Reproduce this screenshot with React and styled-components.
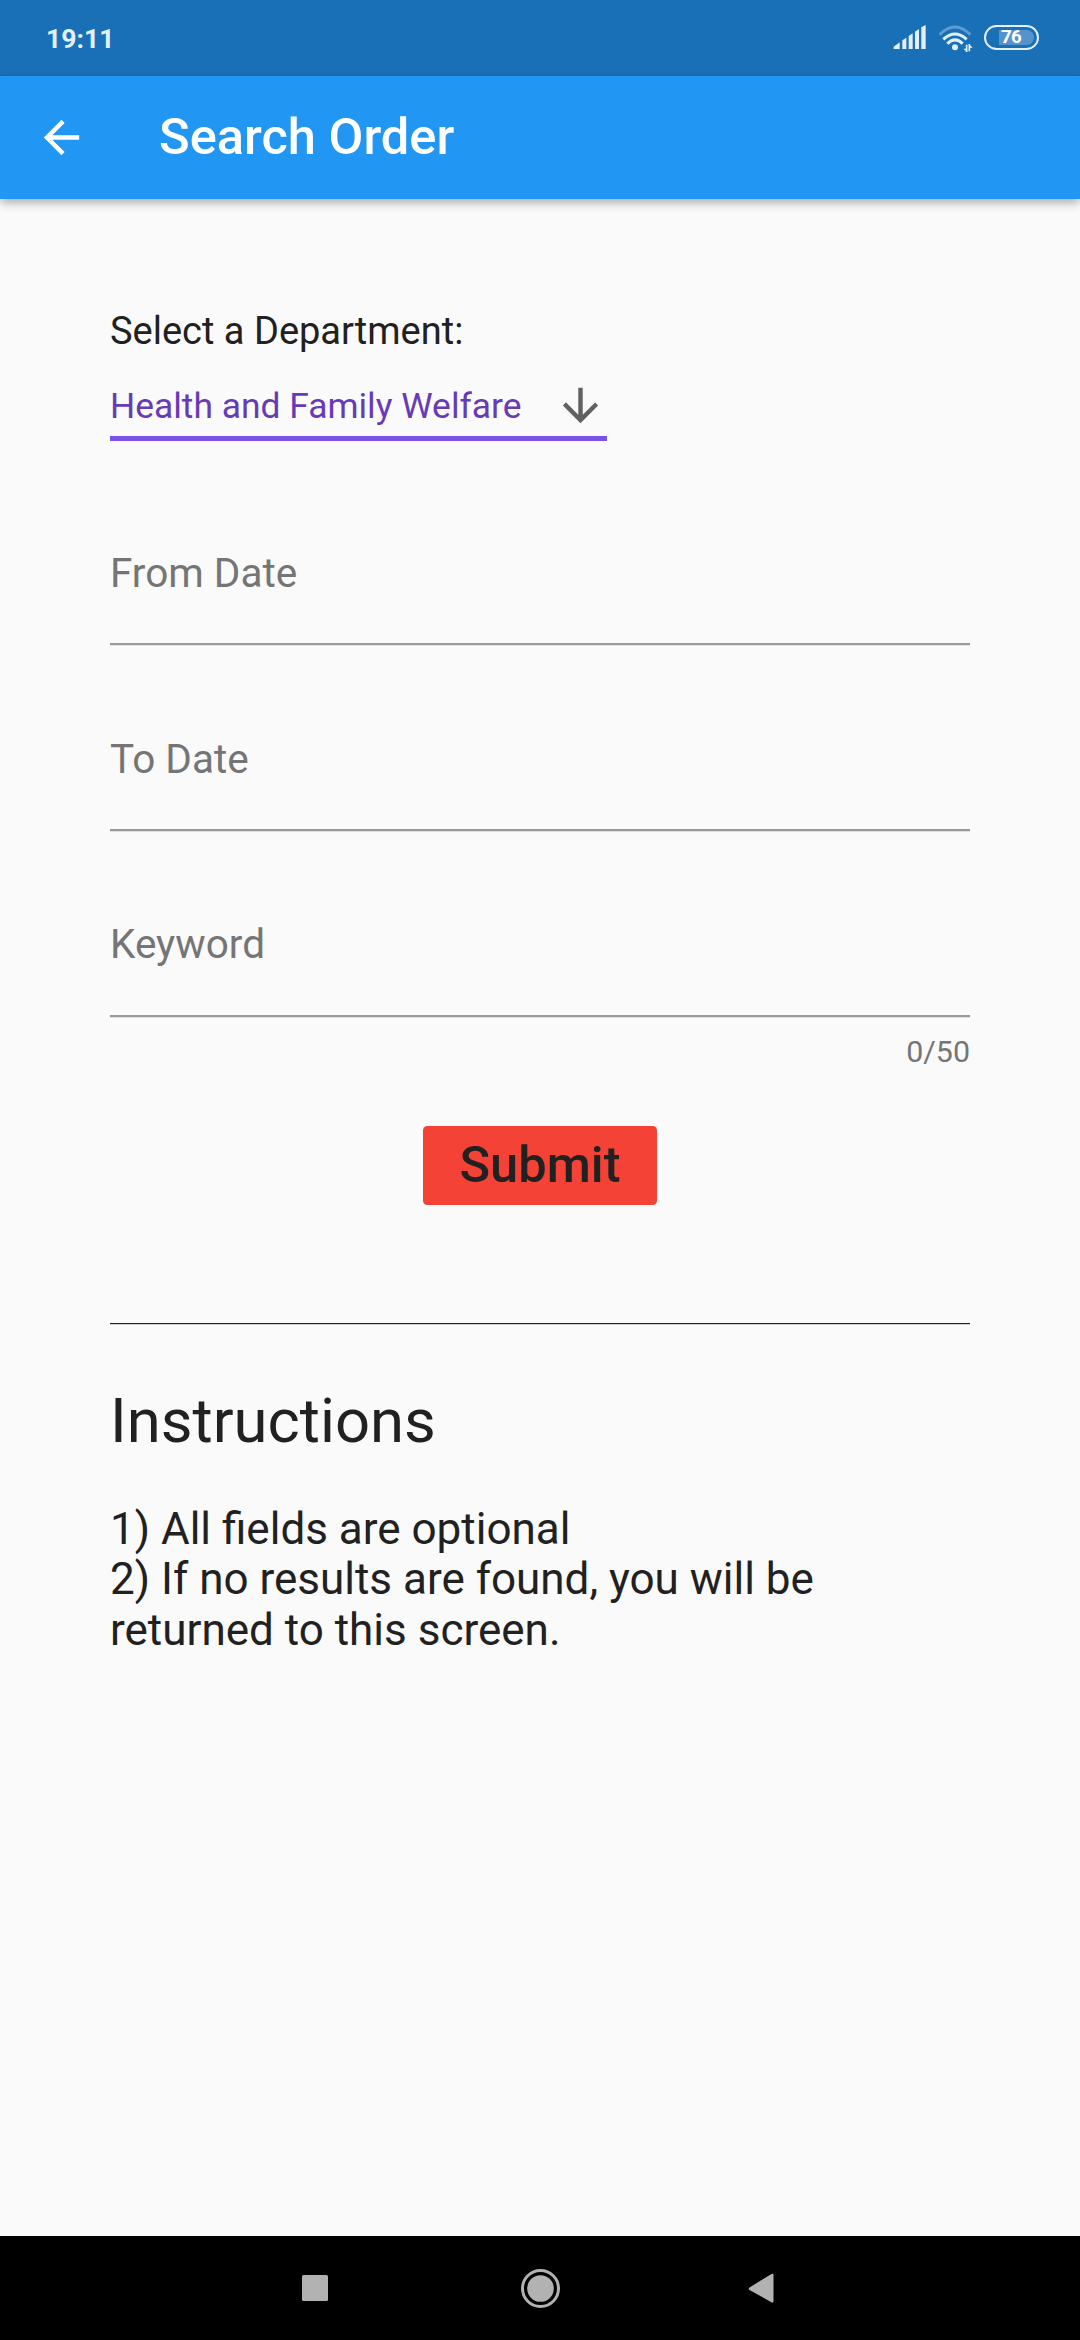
import React from "react";
import styled, { createGlobalStyle } from "styled-components";

const GlobalStyle = createGlobalStyle`
  * { box-sizing: border-box; }
  body { margin: 0; background: #fafafa; }
`;

const Screen = styled.div`
  display: flex;
  flex-direction: column;
  width: 1080px;
  height: 2340px;
  overflow: hidden;
  background: #fafafa;
  color: #212121;
  font-family: Roboto, "Noto Sans", sans-serif;
`;

const StatusBar = styled.header`
  flex: none;
  display: flex;
  align-items: flex-start;
  height: 76px;
  padding: 22px 41px 0 46px;
  background: #1a70b7;
  color: #e3effa;
`;

const Clock = styled.time`
  flex: 1;
  padding-top: 1px;
  font-size: 26.6px;
  line-height: 32px;
  font-weight: 700;
`;

const StatusIcon = styled.svg`
  display: block;
  flex: none;
  margin-left: ${(p) => p.$gap || 0}px;
`;

const Battery = styled.div`
  display: flex;
  align-items: center;
  width: 55px;
  height: 25px;
  margin: 3px 0 0 11px;
  padding: 0 3px 0 13px;
  border: 2px solid #e3effa;
  border-radius: 13px;
`;

const BatteryLevel = styled.div`
  width: 36px;
  height: 15px;
  padding-left: 2px;
  border-radius: 0 8px 8px 0;
  background: #5593ca;
  color: #ffffff;
  font-size: 18.7px;
  line-height: 15px;
  font-weight: 700;
  letter-spacing: -0.8px;
`;

const AppBar = styled.div`
  flex: none;
  display: flex;
  align-items: center;
  height: 123px;
  padding-left: 35px;
  gap: 71px;
  background: #2196f3;
  color: #ffffff;
  box-shadow: 0 4px 9px rgba(0, 0, 0, 0.3);
`;

const Title = styled.h1`
  margin: 0;
  padding-bottom: 2px;
  font-size: 50.6px;
  line-height: 60px;
  font-weight: 500;
`;

const Form = styled.main`
  flex: 1;
  display: flex;
  flex-direction: column;
  padding: 109px 110px 0;
`;

const Label = styled.label`
  font-size: 38px;
  line-height: 46px;
`;

const Dropdown = styled.div`
  display: flex;
  align-items: center;
  justify-content: space-between;
  width: 497px;
  height: 87px;
  padding-top: 21px;
  border-bottom: 5px solid #7a52e8;
  color: #673ab7;
  font-size: 35.4px;
  line-height: 42px;
`;

const Field = styled.div`
  height: ${(p) => p.$height || 96}px;
  margin-top: ${(p) => p.$top}px;
  border-bottom: 2px solid #999999;
  box-shadow: 0 1px 0 #e0e0e0;
  color: #757575;
  font-size: 40.5px;
  line-height: 48px;
`;

const Counter = styled.div`
  margin-top: 17px;
  align-self: flex-end;
  color: #757575;
  font-size: 30.4px;
  line-height: 36px;
`;

const SubmitButton = styled.button`
  align-self: center;
  width: 234px;
  height: 79px;
  margin-top: 56px;
  padding: 0 0 2px;
  border: 0;
  border-radius: 4.4px;
  background: #f44336;
  color: #212121;
  font-family: inherit;
  font-size: 50.6px;
  line-height: 60px;
  font-weight: 500;
`;

const Divider = styled.hr`
  width: 100%;
  height: 1px;
  margin: 118px 0 0;
  border: 0;
  background: #212121;
  box-shadow: 0 1px 0 #d0d0d0;
`;

const Heading = styled.h2`
  margin: 61px 0 0;
  font-size: 61.6px;
  line-height: 72px;
  font-weight: 400;
`;

const Instructions = styled.p`
  margin: 46.6px 0 0;
  font-size: 44px;
  line-height: 50.5px;
`;

const NavBar = styled.nav`
  flex: none;
  display: flex;
  justify-content: center;
  align-items: center;
  gap: 185px;
  height: 104px;
  background: #000000;
`;

const NavIcon = styled.svg`
  display: block;
  width: 40px;
  height: 40px;
  fill: #b2b2b2;
`;

function SignalIcon() {
  return (
    <StatusIcon width="34" height="28" viewBox="99 66 102 84" fill="#e3effa">
      <path d="M101 147V140L119 127V147ZM127 147V121L139 113V147ZM146 147V108L158 100V147ZM165 147V95L177 87V147ZM184 147V82L197 75V147Z" />
    </StatusIcon>
  );
}

function WifiIcon() {
  return (
    <StatusIcon $gap={11} width="35" height="32" viewBox="234 66 105 96" fill="none" stroke="#e3effa">
      <path d="M239 104Q285 58 331 104" strokeWidth="9" stroke="#5f9bd0" />
      <path d="M250 118Q285 86 320 118" strokeWidth="9" />
      <path d="M262 131Q285 108 308 131" strokeWidth="9" />
      <circle cx="285" cy="142" r="9" fill="#e3effa" stroke="none" />
      <path d="M320 134V156M328 132V154" strokeWidth="5" />
      <path d="M310 146H321V156ZM338 143H327V132Z" fill="#e3effa" stroke="none" />
    </StatusIcon>
  );
}

function BackArrow() {
  return (
    <svg width="53" height="53" viewBox="0 0 24 24" fill="#ffffff">
      <path d="M20 11H7.83l5.59-5.59L12 4l-8 8 8 8 1.41-1.41L7.83 13H20v-2z" />
    </svg>
  );
}

function DownArrow() {
  return (
    <svg width="53" height="53" viewBox="0 0 24 24" fill="#616161">
      <path d="M20 12l-1.41-1.41L13 16.17V4h-2v12.17l-5.58-5.59L4 12l8 8 8-8z" />
    </svg>
  );
}

export default function App() {
  return (
    <Screen>
      <GlobalStyle />
      <StatusBar>
        <Clock>19:11</Clock>
        <SignalIcon />
        <WifiIcon />
        <Battery>
          <BatteryLevel>76</BatteryLevel>
        </Battery>
      </StatusBar>
      <AppBar>
        <BackArrow />
        <Title>Search Order</Title>
      </AppBar>
      <Form>
        <Label>Select a Department:</Label>
        <Dropdown>
          <span>Health and Family Welfare</span>
          <DownArrow />
        </Dropdown>
        <Field $top={108}>From Date</Field>
        <Field $top={90}>To Date</Field>
        <Field $top={89} $height={97}>Keyword</Field>
        <Counter>0/50</Counter>
        <SubmitButton type="button">Submit</SubmitButton>
        <Divider />
        <Heading>Instructions</Heading>
        <Instructions>
          1) All fields are optional
          <br />
          2) If no results are found, you will be
          <br />
          returned to this screen.
        </Instructions>
      </Form>
      <NavBar>
        <NavIcon viewBox="0 0 40 40">
          <rect x="7" y="7" width="26" height="26" rx="1.5" />
        </NavIcon>
        <NavIcon viewBox="0 0 40 40">
          <circle cx="20.5" cy="20.5" r="18" fill="none" stroke="#b2b2b2" strokeWidth="3" />
          <circle cx="20.5" cy="20.5" r="13.3" />
        </NavIcon>
        <NavIcon viewBox="0 0 40 40">
          <path d="M4.5 19.500 26 6.200Q28.500 5 28.500 7V33Q28.500 35.500 26 34L4.500 22Q3 20.500 4.500 19.500Z" />
        </NavIcon>
      </NavBar>
    </Screen>
  );
}
